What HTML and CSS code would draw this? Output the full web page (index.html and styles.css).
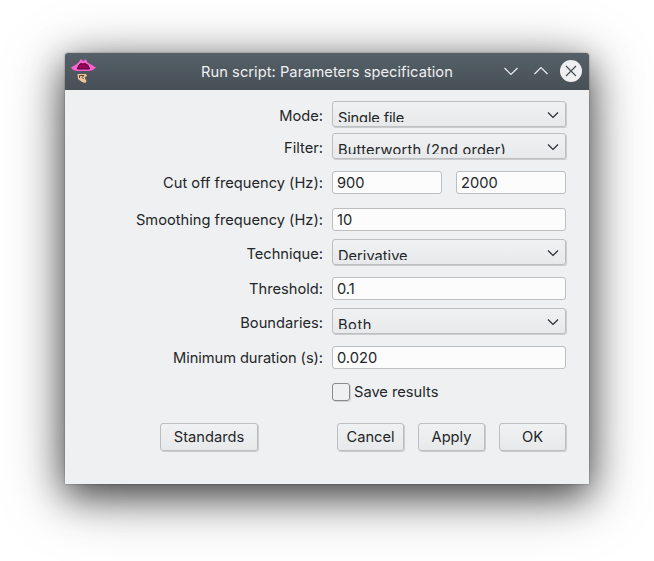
FILE: index.html
```
<!DOCTYPE html>
<html lang="en">
<head>
<meta charset="utf-8">
<title>Run script: Parameters specification</title>
<link rel="stylesheet" href="styles.css">
</head>
<body>
<main class="window">
  <header class="titlebar">
    <svg class="app-icon" width="25" height="25" viewBox="0 0 25 25">
      <path d="M0 8.500L5 5.500L8 3L9.500 0.500H11L12.500 2.500L14 0.500H15L16.500 3.500L20 5.500L25 8.500L22 11L18 12H6L2 11Z" fill="#fb62cf"/>
      <path d="M6.500 10Q7 5.500 10 4.500L12 5L14 4.500Q18 5.500 18.500 10Z" fill="#99045d" stroke="#500339"/>
      <path d="M6.500 15H15L16 17L13.500 18.500L15.500 22L14.500 24L11 23L7 20Z" fill="#efc498"/>
      <path d="M8.500 19V16.500H13L11 18.500L12.500 20" fill="none" stroke="#5d4634"/>
    </svg>
    <h1 class="title">Run script: Parameters specification</h1>
    <svg class="controls" width="80" height="24" viewBox="0 0 80 24" fill="none">
      <path d="M1.500 9L8 15.500L14.500 9M31.500 15L38 8.500L44.500 15" stroke="#eff0f1" stroke-width="1.200"/>
      <circle cx="68" cy="12" r="11" fill="#eff0f1"/>
      <path d="M63 7L73 17M73 7L63 17" stroke="#475057" stroke-width="1.200"/>
    </svg>
  </header>
  <form class="form">
    <div class="row combo-row"><span class="label">Mode:</span><div class="combo"><span class="value tight">Single file</span><svg class="arrow" width="12" height="8" viewBox="0 0 12 8"><path d="M1 1.500L6 6.500L11 1.500"/></svg></div></div>
    <div class="row combo-row second"><span class="label">Filter:</span><div class="combo"><span class="value loose">Butterworth (2nd order)</span><svg class="arrow" width="12" height="8" viewBox="0 0 12 8"><path d="M1 1.500L6 6.500L11 1.500"/></svg></div></div>
    <div class="row wide-gap"><span class="label">Cut off frequency (Hz):</span><div class="pair"><div class="field">900</div><div class="field">2000</div></div></div>
    <div class="row next-field"><span class="label">Smoothing frequency (Hz):</span><div class="field">10</div></div>
    <div class="row combo-row after-field"><span class="label">Technique:</span><div class="combo"><span class="value">Derivative</span><svg class="arrow" width="12" height="8" viewBox="0 0 12 8"><path d="M1 1.500L6 6.500L11 1.500"/></svg></div></div>
    <div class="row wide-gap"><span class="label">Threshold:</span><div class="field">0.1</div></div>
    <div class="row combo-row after-field"><span class="label">Boundaries:</span><div class="combo"><span class="value wide">Both</span><svg class="arrow" width="12" height="8" viewBox="0 0 12 8"><path d="M1 1.500L6 6.500L11 1.500"/></svg></div></div>
    <div class="row wide-gap"><span class="label snug">Minimum duration (s):</span><div class="field">0.020</div></div>
    <div class="check"><span class="box"></span><span>Save results</span></div>
    <div class="actions">
      <div class="button standards">Standards</div>
      <div class="button">Cancel</div>
      <div class="button">Apply</div>
      <div class="button">OK</div>
    </div>
  </form>
</main>
</body>
</html>
```

FILE: styles.css
```
* { box-sizing: border-box; }
body {
  margin: 0;
  height: 561px;
  padding: 53px 65px;
  overflow: hidden;
  background: #fff;
  color: #232629;
  font: 14.667px/18px Inter, "Noto Sans", sans-serif;
}
.window {
  height: 431px;
  background: #eff0f1;
  border-radius: 3px 3px 0 0;
  box-shadow: 0 0 2px rgba(0, 0, 0, .4), 0 11px 36px rgba(0, 0, 0, .62), 0 12px 64px rgba(0, 0, 0, .35);
}
.titlebar {
  display: flex;
  align-items: center;
  height: 37px;
  padding: 0 6px;
  border-radius: 3px 3px 0 0;
  background: linear-gradient(#566068, #475057);
  color: #eff0f1;
}
.title {
  flex: 1;
  margin: 0;
  padding-left: 55px;
  font-size: inherit;
  font-weight: 400;
  letter-spacing: .04px;
  text-align: center;
  white-space: nowrap;
}
.app-icon { margin-top: -1px; }
.controls { margin-top: -1px; }
.form { padding: 11px 23px 0 0; }
.row {
  display: grid;
  grid-template-columns: 258px 234px;
  column-gap: 9px;
  height: 23px;
  align-items: center;
}
.label { text-align: right; white-space: nowrap; }
.snug { letter-spacing: -.07px; }
.combo-row { height: 26px; }
.combo-row .label { padding-top: 4px; }
.second { margin-top: 6px; }
.wide-gap { margin-top: 12px; }
.next-field { margin-top: 14px; }
.after-field { margin-top: 8px; }
.combo, .button {
  border: 1px solid #bcbebf;
  border-radius: 3px;
  background: linear-gradient(#f0f1f2, #e8e9ea);
  box-shadow: 1px 1px 0 rgba(0, 0, 0, .15);
}
.combo {
  display: flex;
  justify-content: space-between;
  height: 26px;
  padding: 0 6px 0 5px;
}
.value {
  height: 20px;
  padding-top: 7px;
  overflow: hidden;
  white-space: nowrap;
}
.tight { letter-spacing: -.17px; }
.loose { letter-spacing: .18px; }
.wide { letter-spacing: .5px; }
.arrow {
  margin-top: 9px;
  fill: none;
  stroke: #232629;
  stroke-width: 1.1;
}
.field {
  height: 23px;
  padding: 2px 4px;
  border: 1px solid #bcbebf;
  border-radius: 3px;
  background: #fcfcfc;
}
.pair { display: grid; grid-template-columns: 1fr 1fr; gap: 14px; }
.check {
  display: flex;
  align-items: center;
  gap: 4px;
  height: 18px;
  margin: 14px 0 0 267px;
}
.box {
  width: 18px;
  height: 18px;
  border: 1px solid #888a8c;
  border-radius: 3px;
  box-shadow: 1px 1px 0 rgba(0, 0, 0, .12);
}
.actions {
  display: flex;
  gap: 14px;
  margin: 22px 0 0 95px;
}
.button {
  width: 67px;
  height: 28px;
  line-height: 26px;
  text-align: center;
}
.standards { width: 98px; margin-right: 65px; }
```
